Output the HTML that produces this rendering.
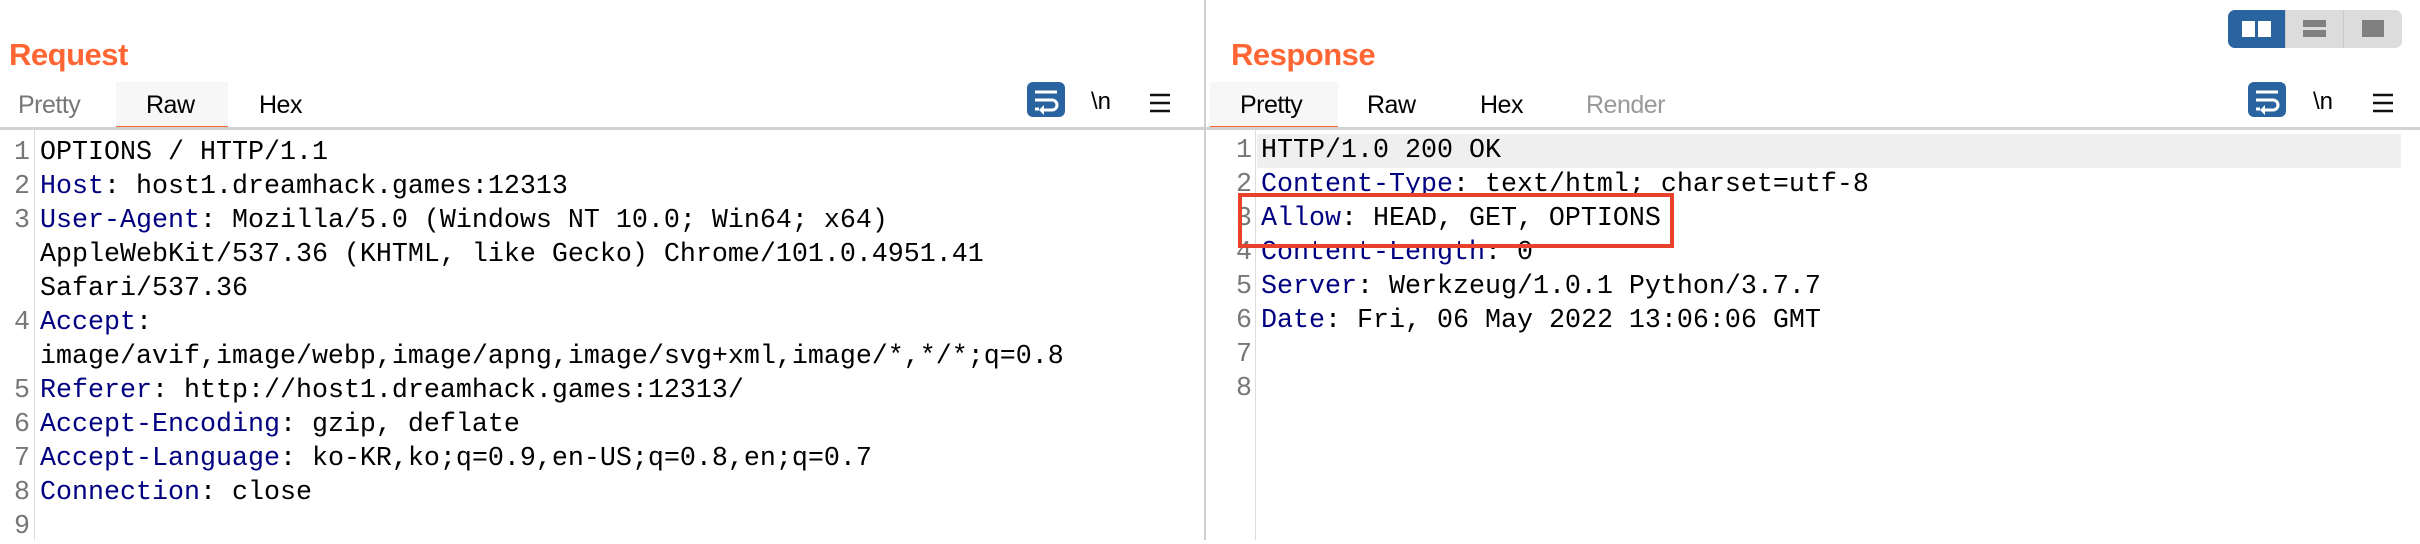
<!DOCTYPE html>
<html><head><meta charset="utf-8"><style>
*{margin:0;padding:0;box-sizing:border-box}
body{width:2420px;height:540px;background:#fff;position:relative;overflow:hidden;font-family:"Liberation Sans",Arial,sans-serif}
.abs{position:absolute}
.title{color:#ff6633;font-weight:bold;font-size:31px;top:37px;letter-spacing:-0.5px}
.tab{font-size:25px;top:91px;color:#000;letter-spacing:-0.5px}
.code{font-family:"Liberation Mono",monospace;font-size:26.67px;line-height:34px;white-space:pre;color:#000}
.k{color:#000080}
.ln{font-family:"Liberation Mono",monospace;font-size:26.67px;line-height:34px;white-space:pre;color:#777;text-align:right}
.bar{background:#cfd3d3;height:3px;top:127px}
.wrap{width:38px;height:35px;background:#2a64a0;border-radius:6px;top:82px}
</style></head><body>
<div class="abs" style="left:1204px;top:0;width:2px;height:540px;background:#cfcfcf"></div>

<div class="abs title" style="left:9px">Request</div>
<div class="abs" style="left:116px;top:82px;width:112px;height:46px;background:#f7f7f7"></div>
<div class="abs" style="left:116px;top:126px;width:112px;height:4px;background:#ff6633"></div>
<div class="abs tab" style="left:18px;color:#777">Pretty</div>
<div class="abs tab" style="left:146px">Raw</div>
<div class="abs tab" style="left:259px">Hex</div>
<div class="abs bar" style="left:0;width:1204px"></div>
<div class="abs wrap" style="left:1027px"></div>
<svg class="abs" style="left:1027px;top:82px" width="38" height="35" viewBox="0 0 38 35"><g stroke="#fff" stroke-width="3" fill="none"><line x1="8" y1="10" x2="30" y2="10"/><path d="M8 18 H25 a5 5 0 0 1 0 10 H16"/><line x1="8" y1="27" x2="12" y2="27"/></g><path d="M17 23 l-5 5 l5 5z" fill="#fff"/></svg>
<div class="abs" style="left:1091px;top:88px;font-size:24px">\n</div>
<svg class="abs" style="left:1150px;top:92px" width="22" height="22"><g stroke="#111" stroke-width="2.5"><line x1="0" y1="3" x2="20" y2="3"/><line x1="0" y1="11" x2="20" y2="11"/><line x1="0" y1="19" x2="20" y2="19"/></g></svg>
<div class="abs" style="left:34px;top:130px;width:1px;height:410px;background:#ddd"></div>
<div class="abs ln" style="left:0;top:136px;width:30px">1
2
3


4

5
6
7
8
9</div>
<div class="abs code" style="left:40px;top:136px">OPTIONS / HTTP/1.1
<span class="k">Host</span>: host1.dreamhack.games:12313
<span class="k">User-Agent</span>: Mozilla/5.0 (Windows NT 10.0; Win64; x64)
AppleWebKit/537.36 (KHTML, like Gecko) Chrome/101.0.4951.41
Safari/537.36
<span class="k">Accept</span>:
image/avif,image/webp,image/apng,image/svg+xml,image/*,*/*;q=0.8
<span class="k">Referer</span>: http://host1.dreamhack.games:12313/
<span class="k">Accept-Encoding</span>: gzip, deflate
<span class="k">Accept-Language</span>: ko-KR,ko;q=0.9,en-US;q=0.8,en;q=0.7
<span class="k">Connection</span>: close
</div>

<div class="abs" style="left:2228px;top:10px;width:174px;height:38px;background:#dcdcdc;border-radius:7px;overflow:hidden">
  <div class="abs" style="left:0;top:0;width:57px;height:38px;background:#2a64a0"></div>
  <div class="abs" style="left:57px;top:0;width:1px;height:38px;background:#c8c8c8"></div>
  <div class="abs" style="left:115px;top:0;width:1px;height:38px;background:#c8c8c8"></div>
  <div class="abs" style="left:14px;top:11px;width:13px;height:16px;background:#fff"></div>
  <div class="abs" style="left:30px;top:11px;width:13px;height:16px;background:#fff"></div>
  <div class="abs" style="left:75px;top:10px;width:23px;height:7px;background:#808080"></div>
  <div class="abs" style="left:75px;top:20px;width:23px;height:7px;background:#808080"></div>
  <div class="abs" style="left:134px;top:10px;width:22px;height:17px;background:#808080"></div>
</div>
<div class="abs title" style="left:1231px">Response</div>
<div class="abs" style="left:1210px;top:82px;width:128px;height:46px;background:#f7f7f7"></div>
<div class="abs" style="left:1210px;top:126px;width:128px;height:4px;background:#ff6633"></div>
<div class="abs tab" style="left:1240px">Pretty</div>
<div class="abs tab" style="left:1367px">Raw</div>
<div class="abs tab" style="left:1480px">Hex</div>
<div class="abs tab" style="left:1586px;color:#999">Render</div>
<div class="abs bar" style="left:1206px;width:1214px"></div>
<div class="abs wrap" style="left:2248px"></div>
<svg class="abs" style="left:2248px;top:82px" width="38" height="35" viewBox="0 0 38 35"><g stroke="#fff" stroke-width="3" fill="none"><line x1="8" y1="10" x2="30" y2="10"/><path d="M8 18 H25 a5 5 0 0 1 0 10 H16"/><line x1="8" y1="27" x2="12" y2="27"/></g><path d="M17 23 l-5 5 l5 5z" fill="#fff"/></svg>
<div class="abs" style="left:2313px;top:88px;font-size:24px">\n</div>
<svg class="abs" style="left:2373px;top:92px" width="22" height="22"><g stroke="#111" stroke-width="2.5"><line x1="0" y1="3" x2="20" y2="3"/><line x1="0" y1="11" x2="20" y2="11"/><line x1="0" y1="19" x2="20" y2="19"/></g></svg>
<div class="abs" style="left:1257px;top:134px;width:1144px;height:34px;background:#efefef"></div>
<div class="abs" style="left:1255px;top:130px;width:1px;height:410px;background:#ddd"></div>
<div class="abs ln" style="left:1222px;top:134px;width:30px">1
2
3
4
5
6
7
8</div>
<div class="abs code" style="left:1261px;top:134px">HTTP/1.0 200 OK
<span class="k">Content-Type</span>: text/html; charset=utf-8
<span class="k">Allow</span>: HEAD, GET, OPTIONS
<span class="k">Content-Length</span>: 0
<span class="k">Server</span>: Werkzeug/1.0.1 Python/3.7.7
<span class="k">Date</span>: Fri, 06 May 2022 13:06:06 GMT
</div>
<div class="abs" style="left:1238px;top:193px;width:436px;height:55px;border:4px solid #e8412c"></div>
</body></html>
